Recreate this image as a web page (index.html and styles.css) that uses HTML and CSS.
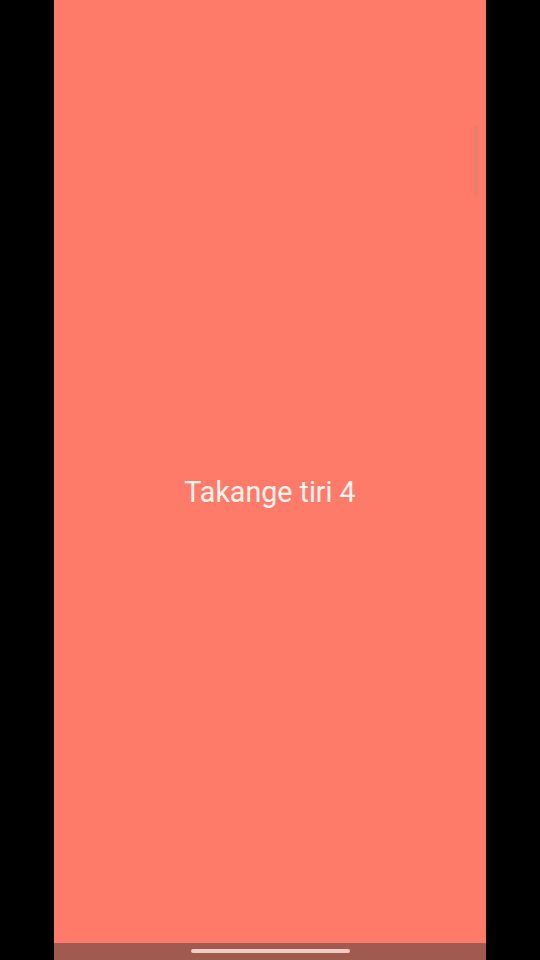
FILE: index.html
```html
<!DOCTYPE html>
<html>
<head>
<meta charset="utf-8">
<link rel="stylesheet" href="styles.css">
</head>
<body>
<div class="screen">
  <div class="page">
    <div class="scrollbar"></div>
    <div class="label">Takange tiri 4</div>
  </div>
  <div class="navbar"><div class="home"></div></div>
</div>
</body>
</html>
```
FILE: styles.css
```css
html, body {
  margin: 0;
  padding: 0;
  background: #000;
  width: 540px;
  height: 960px;
  overflow: hidden;
}
.screen {
  width: 432px;
  height: 960px;
  margin: 0 auto;
  display: flex;
  flex-direction: column;
}
.page {
  position: relative;
  flex: 1;
  background: #ff7b69;
  display: flex;
  align-items: center;
  justify-content: center;
}
.label {
  font-family: Roboto, "Noto Sans", sans-serif;
  font-size: 28.6px;
  color: #fff3ef;
  margin-top: 40px;
}
.scrollbar {
  position: absolute;
  right: 8px;
  top: 125px;
  width: 4px;
  height: 72px;
  border-radius: 2px;
  background: rgba(160, 130, 120, 0.2);
}
.navbar {
  height: 17px;
  background: #a15a50;
  display: flex;
  justify-content: center;
  padding-top: 6px;
  box-sizing: border-box;
}
.home {
  width: 159px;
  height: 4px;
  border-radius: 2px;
  background: #f2cbc4;
}
```
